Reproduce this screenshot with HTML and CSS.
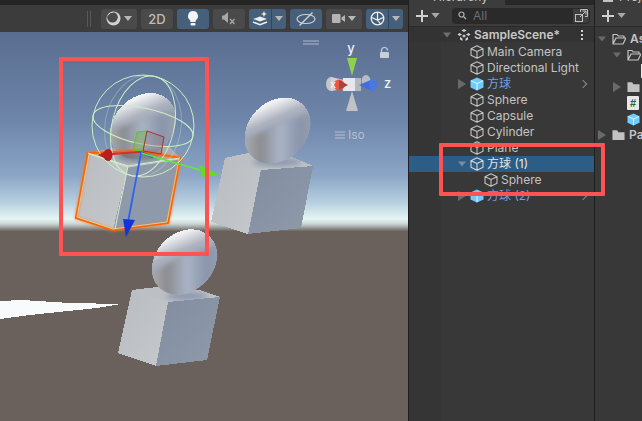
FILE: index.html
```html
<!DOCTYPE html>
<html lang="en">
<head>
<meta charset="utf-8">
<title>Unity Editor</title>
<link rel="stylesheet" href="styles.css">
</head>
<body>
<svg class="defs" width="0" height="0" aria-hidden="true">
  <defs>
    <symbol id="cube" viewBox="0 0 14 14">
      <path d="M7 .8 13 3.700v6.600L7 13.200 1 10.300V3.700Z M1 3.700 7 6.600 13 3.700 M7 6.600v6.600" fill="none" stroke="currentColor" stroke-width="1.100" stroke-linejoin="round"/>
    </symbol>
    <symbol id="prefab" viewBox="0 0 14 14">
      <path d="M7 .5 13.500 3.500v7L7 13.500.5 10.500v-7Z" fill="#6fcbff"/>
      <path d="M1 3.700 7 6.600 13 3.700 M7 6.600v6.600" fill="none" stroke="#e6f6ff" stroke-width="1"/>
    </symbol>
    <symbol id="folder-open" viewBox="0 0 14 12">
      <path d="M1 11V1.500h4l1.200 1.500H12V5H4L1 11h10l3-6H4" fill="none" stroke="#c4c4c4" stroke-width="1.200" stroke-linejoin="round"/>
    </symbol>
    <symbol id="folder" viewBox="0 0 14 12">
      <path d="M.5 11.500V1h5l1.400 2h6.600v8.500Z" fill="#c2c2c2"/>
    </symbol>
    <symbol id="tri-down" viewBox="0 0 10 6">
      <path d="M0 0h10L5 6Z" fill="currentColor"/>
    </symbol>
    <symbol id="tri-right" viewBox="0 0 8 10">
      <path d="M0 0v10l8-5Z" fill="currentColor"/>
    </symbol>
  </defs>
</svg>
<div class="app">
  <section class="scene">
    <div class="strip"></div>
    <div class="toolbar">
      <span class="grip"></span>
      <div class="btn w36 grey">
        <svg class="ic" width="15" height="15" viewBox="0 0 15 15"><circle cx="7.500" cy="7.500" r="7" fill="#d2d2d2"/><circle cx="6.500" cy="6.300" r="5.300" fill="#4a4a4a"/><path d="M1.800 4.500A6.300 6.300 0 0 1 7.500 1" fill="none" stroke="#d2d2d2" stroke-width="1"/></svg>
        <svg class="drop" width="8" height="5"><use href="#tri-down"/></svg>
      </div>
      <div class="btn w32 grey label">2D</div>
      <div class="btn w32 blue">
        <svg width="12" height="15" viewBox="0 0 12 15"><path d="M6 0a5 5 0 0 1 3 9l-.5 2h-5L3 9A5 5 0 0 1 6 0Z" fill="#f4f4f4"/><rect x="3.500" y="12" width="5" height="2.500" rx="1" fill="#f4f4f4"/></svg>
      </div>
      <div class="btn w32 grey">
        <svg width="15" height="13" viewBox="0 0 15 13"><path d="M0 3.500h2L6 0v11L2 7.500H0Z" fill="#a8a8a8"/><path d="M8 7l4.500 5M12.500 7 8 12" stroke="#a8a8a8" stroke-width="1.300" fill="none"/></svg>
      </div>
      <div class="split">
        <div class="btn w23 blue joined-l">
          <svg width="17" height="15" viewBox="0 0 17 15"><path d="M1 8 8 5.500 15 8 8 10.500Z" fill="#efefef"/><path d="M1 11 8 13.800 15 11" fill="none" stroke="#efefef" stroke-width="1.500"/><path d="M12 0l.9 2.300L15 3l-2.100.8L12 6l-.9-2.200L9 3l2.100-.7Z" fill="#efefef"/></svg>
        </div>
        <div class="btn w14 blue joined-r"><svg class="drop" width="8" height="5"><use href="#tri-down"/></svg></div>
      </div>
      <div class="btn w32 blue">
        <svg width="20" height="14" viewBox="0 0 20 14"><ellipse cx="10" cy="7" rx="9" ry="4.500" fill="none" stroke="#cfcfcf" stroke-width="1.200"/><path d="M3.500 13.500 16.500.5" stroke="#cfcfcf" stroke-width="1.400"/></svg>
      </div>
      <div class="btn w36 grey">
        <svg class="ic" width="13" height="9" viewBox="0 0 13 9"><rect width="8.500" height="9" rx="1" fill="#b4b4b4"/><path d="M9.500 3.500 13 1v7L9.500 5.500Z" fill="#b4b4b4"/></svg>
        <svg class="drop" width="8" height="5"><use href="#tri-down"/></svg>
      </div>
      <div class="split">
        <div class="btn w23 blue joined-l">
          <svg width="15" height="15" viewBox="0 0 15 15"><circle cx="7.500" cy="7.500" r="6.300" fill="none" stroke="#f0f0f0" stroke-width="1.300"/><path d="M1.500 6.500 7.500 9l6-2.500M7.500 1.200V9l3.500 4.500" fill="none" stroke="#f0f0f0" stroke-width="1.200"/></svg>
        </div>
        <div class="btn w14 blue joined-r"><svg class="drop" width="8" height="5"><use href="#tri-down"/></svg></div>
      </div>
    </div>
    <svg class="view" width="408" height="389" viewBox="0 32 408 389" shape-rendering="crispEdges">
      <defs>
        <linearGradient id="sky" x1="0" y1="32" x2="0" y2="231" gradientUnits="userSpaceOnUse">
          <stop offset="0" stop-color="#596d90"/>
          <stop offset=".45" stop-color="#6e86aa"/>
          <stop offset=".72" stop-color="#8ba5c6"/>
          <stop offset=".86" stop-color="#b8d0e0"/>
          <stop offset=".94" stop-color="#e6f6f4"/>
          <stop offset=".965" stop-color="#c9d5d3"/>
          <stop offset="1" stop-color="#6f6762"/>
        </linearGradient>
        <linearGradient id="sph" x1="0" y1="0" x2="1" y2=".5">
          <stop offset="0" stop-color="#ffffff"/>
          <stop offset=".2" stop-color="#eeeff1"/>
          <stop offset=".42" stop-color="#aeb3bf"/>
          <stop offset=".68" stop-color="#8f9ab0"/>
          <stop offset="1" stop-color="#a8adb8"/>
        </linearGradient>
        <linearGradient id="sphLow" x1="0" y1="0" x2="1" y2="0">
          <stop offset="0" stop-color="#c0c0c2"/>
          <stop offset=".28" stop-color="#8b8c90"/>
          <stop offset=".5" stop-color="#aab4c6"/>
          <stop offset=".72" stop-color="#8a95aa"/>
          <stop offset="1" stop-color="#a2a7b2"/>
        </linearGradient>
        <linearGradient id="left" x1="0" y1="0" x2="1" y2="1">
          <stop offset="0" stop-color="#b8bbbf"/>
          <stop offset="1" stop-color="#c6c9cc"/>
        </linearGradient>
        <linearGradient id="right" x1="0" y1="0" x2="1" y2="1">
          <stop offset="0" stop-color="#818c9e"/>
          <stop offset="1" stop-color="#8f9aab"/>
        </linearGradient>
        <filter id="soft" x="-20%" y="-20%" width="140%" height="140%"><feGaussianBlur stdDeviation="2.500"/></filter>
        <filter id="glow" x="-10%" y="-10%" width="120%" height="120%"><feGaussianBlur stdDeviation="1"/></filter>
        <clipPath id="c1"><ellipse cx="143" cy="126" rx="29" ry="36.500" transform="rotate(45 143 126)"/></clipPath>
        <clipPath id="c2"><ellipse cx="277.500" cy="130.500" rx="29" ry="36.500" transform="rotate(45 277.500 130.500)"/></clipPath>
        <clipPath id="c3"><ellipse cx="184.500" cy="262" rx="29" ry="36" transform="rotate(45 184.500 262)"/></clipPath>
      </defs>
      <rect x="0" y="32" width="408" height="199" fill="url(#sky)"/>
      <rect x="0" y="231" width="408" height="190" fill="#6a615c"/>
      <path d="M0 301 22 300 70 303 121 304 97 308 30 315 0 319Z" fill="#f8fbfb"/>

      <!-- right object -->
      <path d="M225 158 248 153 290 156 313 166 261 170Z" fill="#bcbfc4"/>
      <ellipse cx="277" cy="162" rx="24" ry="4" fill="#8d9ab0" filter="url(#soft)"/>
      <path d="M225 158 261 170 248 234 211 222Z" fill="url(#left)"/>
      <path d="M261 170 313 166 301 228 248 234Z" fill="url(#right)"/>
      <ellipse cx="277.500" cy="130.500" rx="29" ry="36.500" transform="rotate(45 277.500 130.500)" fill="url(#sph)"/>
      <g clip-path="url(#c2)">
        <path d="M235 146 270 128 325 108 325 175 235 175Z" fill="url(#sphLow)" filter="url(#soft)"/>
      </g>

      <!-- lower object -->
      <path d="M132 290 157 287 200 290 220 297 168 302Z" fill="#bcbfc4"/>
      <ellipse cx="187" cy="296" rx="20" ry="4" fill="#8d9ab0" filter="url(#soft)"/>
      <path d="M132 290 168 302 156 366 118 353Z" fill="url(#left)"/>
      <path d="M168 302 220 297 207 360 156 366Z" fill="url(#right)"/>
      <ellipse cx="184.500" cy="262" rx="29" ry="36" transform="rotate(45 184.500 262)" fill="url(#sph)"/>
      <g clip-path="url(#c3)">
        <path d="M142 280 178 258 232 240 232 305 142 305Z" fill="url(#sphLow)" filter="url(#soft)"/>
      </g>

      <!-- selected object -->
      <path d="M88 153 128 145 170 147 180 158 128 166Z" fill="#a9aeb8"/>
      <path d="M88 153 128 166 113 230 76 218Z" fill="url(#left)"/>
      <path d="M128 166 180 158 168 223 113 230Z" fill="#8e99ab"/>
      <ellipse cx="143" cy="126" rx="29" ry="36.500" transform="rotate(45 143 126)" fill="url(#sph)"/>
      <g clip-path="url(#c1)">
        <path d="M100 134 135 122 185 108 185 165 100 165Z" fill="url(#sphLow)" filter="url(#soft)"/>
      </g>
      <ellipse cx="140" cy="156" rx="22" ry="5" fill="#5a6272" opacity=".6" filter="url(#soft)"/>
      <g shape-rendering="geometricPrecision">
        <path d="M88 153 140 151 180 158 168 223 113 230 76 218Z" fill="none" stroke="#ff7a20" stroke-width="4" stroke-linejoin="round" opacity=".45" filter="url(#glow)"/>
        <path d="M88 153 140 151 180 158 168 223 113 230 76 218Z" fill="none" stroke="#ff6200" stroke-width="2.200" stroke-linejoin="round"/>
        <path d="M88 153 128 166 180 158M128 166 115 229" fill="none" stroke="#d6f0c8" stroke-width="1"/>
        <path d="M89 154 128 167 179 159 167 222 113 229 77 217Z" fill="none" stroke="#d6f0c8" stroke-width=".7"/>
        <g fill="none" stroke="#cdeec4" stroke-width="1">
          <circle cx="143" cy="126" r="51"/>
          <ellipse cx="143" cy="126" rx="51" ry="18" transform="rotate(12 143 126)"/>
          <ellipse cx="143" cy="126" rx="31" ry="51" transform="rotate(14 143 126)"/>
          <ellipse cx="143" cy="126" rx="51" ry="38" transform="rotate(100 143 126)" opacity=".35"/>
        </g>
        <path d="M137 132 147 131 143 151 133 150Z" fill="#7dac50" fill-opacity=".45" stroke="#55cc22"/>
        <path d="M147 131 164 137 161 154 143 151Z" fill="#8d5a5e" fill-opacity=".2" stroke="#a83232"/>
        <path d="M140 152 153 157" stroke="#2244dd" stroke-width="2"/>
        <path d="M112 154 140 152" stroke="#d03030" stroke-width="2"/>
        <path d="M98 155 110 149 110 161Z" fill="#c41f1f"/>
        <ellipse cx="108" cy="155" rx="4.500" ry="6" fill="#b81c1c"/>
        <path d="M141 153 200 170" stroke="#5fe83a" stroke-width="1.600"/>
        <path d="M200 165 219 175 201 177Z" fill="#5fe01e"/>
        <path d="M141 153 128 222" stroke="#2e62f0" stroke-width="1.800"/>
        <path d="M123 219 135 220 126 237Z" fill="#1133dd"/>
      </g>

      <!-- orientation gizmo -->
      <g shape-rendering="geometricPrecision">
        <path d="M303 41h16M303 44h16" stroke="#aeb8c8" stroke-width="1"/>
        <rect x="380" y="52" width="9" height="6" rx="1" fill="#c8cfd9"/>
        <path d="M381.500 52v-1.500a3 3 0 0 1 6 0" fill="none" stroke="#c8cfd9" stroke-width="1.200"/>
        <text class="axis" x="351" y="53" text-anchor="middle">y</text>
        <path d="M347 58h10l-5 18Z" fill="#8ed14f"/>
        <path d="M346 111h12l-6-20Z" fill="#c0c2c6"/>
        <ellipse cx="331" cy="84" rx="5" ry="7" fill="#c4c6ca"/>
        <path d="M331 77 344 80v9L331 91Z" fill="#d0d2d5"/>
        <ellipse cx="366" cy="81" rx="4.500" ry="6" fill="#b8bbc2"/>
        <path d="M343 78h17v13h-17Z" fill="#e6e7ea"/>
        <path d="M355 78h6v13h-6Z" fill="#b3b7bf"/>
        <circle cx="339" cy="85" r="5.500" fill="#e8574a"/>
        <path d="M339 80 348 85 339 90Z" fill="#a8443c"/>
        <path d="M359 85 373 79v12Z" fill="#3f6fdc"/>
        <ellipse cx="373" cy="85" rx="4" ry="6" fill="#4a78e0"/>
        <text class="axis small" x="330" y="88">x</text>
        <text class="axis" x="384" y="88">z</text>
        <path d="M335 132h10M335 135h10M335 138h10" stroke="#b6bfcc" stroke-width="1"/>
        <text class="iso" x="348" y="139">Iso</text>
      </g>
    </svg>
    <div class="callout callout-scene"></div>
  </section>

  <section class="panel hierarchy">
    <div class="tabs"><div class="tab"><span class="tab-text">Hierarchy</span></div></div>
    <div class="panel-bar">
      <div class="add"><span class="plus"></span><svg class="add-drop" width="9" height="5"><use href="#tri-down"/></svg></div>
      <div class="search"><svg width="9" height="9" viewBox="0 0 9 9"><circle cx="3.500" cy="3.500" r="2.500" fill="none" stroke="#b0b0b0" stroke-width="1.200"/><path d="M5.500 5.500 8 8" stroke="#b0b0b0" stroke-width="1.200"/></svg><span class="search-text">All</span></div>
      <div class="search-btn"><svg width="13" height="13" viewBox="0 0 13 13"><rect x=".5" y="5.500" width="7" height="7" fill="none" stroke="#c0c0c0"/><path d="M5.500 3V.5h7v7H10M5 8 11 2M7.500 2H11v3.500" fill="none" stroke="#c0c0c0"/></svg></div>
    </div>
    <div class="scene-row">
      <svg class="arrow" width="8" height="6"><use href="#tri-down"/></svg>
      <svg class="scene-ic" width="14" height="14" viewBox="0 0 14 14"><g fill="#cfcfcf"><path d="M7 1 9.500 2.500 7 4 4.500 2.500Z"/><path d="M2.500 5 5 6.500 2.500 8 0.500 6.500Z"/><path d="M11.500 5 13.500 6.500 11.500 8 9 6.500Z"/><path d="M7 6.500 9 8 7 9.500 5 8Z"/><path d="M3 9l2.500 1.500V13L3 11.500Z"/><path d="M11 9l-2.500 1.500V13L11 11.500Z"/></g></svg>
      <span class="scene-name">SampleScene*</span>
      <span class="kebab"><i></i><i></i><i></i></span>
    </div>
    <div class="tree">
      <div class="row"><span class="slot"></span><svg class="cube" width="14" height="14"><use href="#cube"/></svg><span>Main Camera</span></div>
      <div class="row"><span class="slot"></span><svg class="cube" width="14" height="14"><use href="#cube"/></svg><span>Directional Light</span></div>
      <div class="row prefab"><svg class="slot" width="8" height="10"><use href="#tri-right"/></svg><svg class="cube" width="14" height="14"><use href="#prefab"/></svg><span>方球</span><span class="chev"></span></div>
      <div class="row"><span class="slot"></span><svg class="cube" width="14" height="14"><use href="#cube"/></svg><span>Sphere</span></div>
      <div class="row"><span class="slot"></span><svg class="cube" width="14" height="14"><use href="#cube"/></svg><span>Capsule</span></div>
      <div class="row"><span class="slot"></span><svg class="cube" width="14" height="14"><use href="#cube"/></svg><span>Cylinder</span></div>
      <div class="row"><span class="slot"></span><svg class="cube" width="14" height="14"><use href="#cube"/></svg><span>Plane</span></div>
      <div class="row selected"><svg class="slot" width="8" height="6"><use href="#tri-down"/></svg><svg class="cube" width="14" height="14"><use href="#cube"/></svg><span>方球 (1)</span></div>
      <div class="row child"><span class="slot"></span><svg class="cube" width="14" height="14"><use href="#cube"/></svg><span>Sphere</span></div>
      <div class="row prefab"><svg class="slot" width="8" height="10"><use href="#tri-right"/></svg><svg class="cube" width="14" height="14"><use href="#prefab"/></svg><span>方球 (2)</span><span class="chev"></span></div>
    </div>
    <div class="callout callout-tree"></div>
  </section>

  <section class="panel project">
    <div class="tabs"><div class="tab"><span class="tab-icon"></span><span class="tab-text">Project</span></div></div>
    <div class="panel-bar">
      <div class="add"><span class="plus"></span><svg class="add-drop" width="9" height="5"><use href="#tri-down"/></svg></div>
    </div>
    <div class="files">
      <div class="file"><svg class="slot" width="8" height="6"><use href="#tri-down"/></svg><svg class="file-ic" width="14" height="12"><use href="#folder-open"/></svg><span class="file-name">Assets</span></div>
      <div class="file lvl"><svg class="slot" width="8" height="6"><use href="#tri-down"/></svg><svg class="file-ic" width="14" height="12"><use href="#folder-open"/></svg></div>
      <div class="file lvl2"><span class="page"></span></div>
      <div class="file lvl"><svg class="slot" width="8" height="10"><use href="#tri-right"/></svg><svg class="file-ic" width="13" height="12"><use href="#folder"/></svg></div>
      <div class="file lvl"><span class="slot"></span><span class="script">#</span></div>
      <div class="file lvl"><span class="slot"></span><svg class="file-ic" width="13" height="13"><use href="#prefab"/></svg></div>
      <div class="file"><svg class="slot" width="8" height="10"><use href="#tri-right"/></svg><svg class="file-ic" width="13" height="12"><use href="#folder"/></svg><span class="file-name">Packages</span></div>
    </div>
  </section>
</div>
</body>
</html>
```

FILE: styles.css
```css
* { box-sizing: border-box; }
html, body { margin: 0; height: 100%; overflow: hidden; background: #1f1f1f; }
body { font: 12px/16px Inter, "Noto Sans CJK SC", "Liberation Sans", sans-serif; color: #c4c4c4; }
.defs { position: absolute; }
.app { display: flex; height: 421px; width: 642px; gap: 1px; }

.scene { position: relative; width: 408px; flex: none; display: flex; flex-direction: column; }
.strip { height: 5px; background: #242424; }
.toolbar { height: 27px; background: #3c3c3c; display: flex; align-items: center; justify-content: flex-end; gap: 4px; padding-right: 5px; }
.grip { width: 4px; height: 16px; margin-right: 6px; border-left: 1px solid #585858; border-right: 1px solid #585858; }
.btn { height: 20px; border-radius: 3px; display: flex; align-items: center; justify-content: center; gap: 3px; color: #b8b8b8; }
.grey { background: #4a4a4a; }
.blue { background: #46607c; }
.label { font-size: 13px; font-weight: 500; color: #bdbdbd; }
.w36 { width: 36px; }
.w32 { width: 32px; }
.w23 { width: 23px; }
.w14 { width: 14px; }
.split { display: flex; gap: 0; }
.joined-l { border-radius: 3px 0 0 3px; border-right: 1px solid #33465c; }
.joined-r { border-radius: 0 3px 3px 0; }
.drop { color: #b8b8b8; }
.view { display: block; flex: none; }
.axis { font: 500 13px Inter, "Liberation Sans", sans-serif; fill: #eef0f4; }
.axis.small { font-size: 11px; }
.iso { font: 12px Inter, "Liberation Sans", sans-serif; fill: #b6bfcc; }

.callout { position: absolute; border: 4px solid #ff5252; border-radius: 1px; pointer-events: none; }
.callout-scene { left: 59px; top: 57px; width: 150px; height: 199px; }
.callout-tree { left: 30px; top: 143px; width: 166px; height: 53px; z-index: 2; }

.panel { position: relative; display: flex; flex-direction: column; background: #383838; }
.hierarchy { width: 185px; flex: none; }
.project { flex: 1; min-width: 0; overflow: hidden; }
.tabs { height: 5px; background: #282828; overflow: hidden; flex: none; }
.tab { width: 96px; height: 5px; background: #3c3c3c; position: relative; }
.tab-text { position: absolute; left: 24px; bottom: 1px; line-height: 14px; white-space: nowrap; }
.tab-icon { position: absolute; left: 8px; top: 0; width: 10px; height: 2px; background: #c4c4c4; }
.panel-bar { height: 22px; background: #3c3c3c; display: flex; align-items: center; flex: none; padding-left: 7px; border-bottom: 1px solid #2a2a2a; }
.add { display: flex; align-items: center; gap: 3px; color: #a8a8a8; width: 36px; }
.plus { width: 12px; height: 12px; position: relative; background: linear-gradient(#d0d0d0, #d0d0d0) center / 12px 2px no-repeat, linear-gradient(#d0d0d0, #d0d0d0) center / 2px 12px no-repeat; }
.search { width: 120px; height: 16px; background: #2a2a2a; border-radius: 4px 0 0 4px; display: flex; align-items: center; gap: 6px; padding-left: 6px; }
.search-text { color: #6f6f6f; }
.search-btn { width: 18px; height: 16px; border: 1px solid #2a2a2a; border-radius: 0 4px 4px 0; background: #3f3f3f; display: flex; align-items: center; justify-content: center; }

.scene-row { height: 15px; background: #333333; display: flex; align-items: center; padding-left: 34px; flex: none; }
.arrow { color: #6f6f6f; }
.scene-ic { margin-left: 6px; }
.scene-name { margin-left: 3px; font-weight: 600; color: #c8c8c8; white-space: nowrap; }
.kebab { margin-left: auto; margin-right: 11px; display: flex; flex-direction: column; gap: 2px; }
.kebab i { width: 2px; height: 2px; background: #d0d0d0; display: block; }

.tree { flex: 1; padding-top: 2px; background: linear-gradient(to right, #353535 32px, #383838 32px); }
.row { height: 16px; display: flex; align-items: center; padding-left: 49px; white-space: nowrap; }
.slot { width: 8px; flex: none; color: #6a6a6a; }
.cube { margin-left: 4px; margin-right: 3px; flex: none; color: #c4c4c4; }
.prefab { color: #6fa0e0; }
.selected { background: #2c5d87; color: #e4e4e4; }
.selected .slot { color: #7d8c9a; }
.selected .cube { color: #d8d8d8; }
.child { padding-left: 63px; }
.chev { margin-left: auto; margin-right: 8px; width: 6px; height: 6px; border-top: 1px solid #8a8a8a; border-right: 1px solid #8a8a8a; transform: rotate(45deg); }

.files { padding-top: 4px; }
.file { height: 16px; display: flex; align-items: center; padding-left: 3px; white-space: nowrap; }
.file .slot { color: #6a6a6a; }
.lvl { padding-left: 18px; }
.lvl2 { padding-left: 46px; }
.file-ic { margin-left: 6px; flex: none; }
.lvl .file-ic { margin-left: 6px; }
.file-name { margin-left: 4px; font-weight: 600; color: #c4c4c4; }
.page { width: 12px; height: 14px; background: #e8e8e8; display: block; flex: none; }
.script { width: 12px; height: 14px; margin-left: 6px; background: #e8e8e8; color: #1e6b2e; font: 700 11px/14px "Liberation Sans", sans-serif; text-align: center; border-radius: 1px; flex: none; }
```
